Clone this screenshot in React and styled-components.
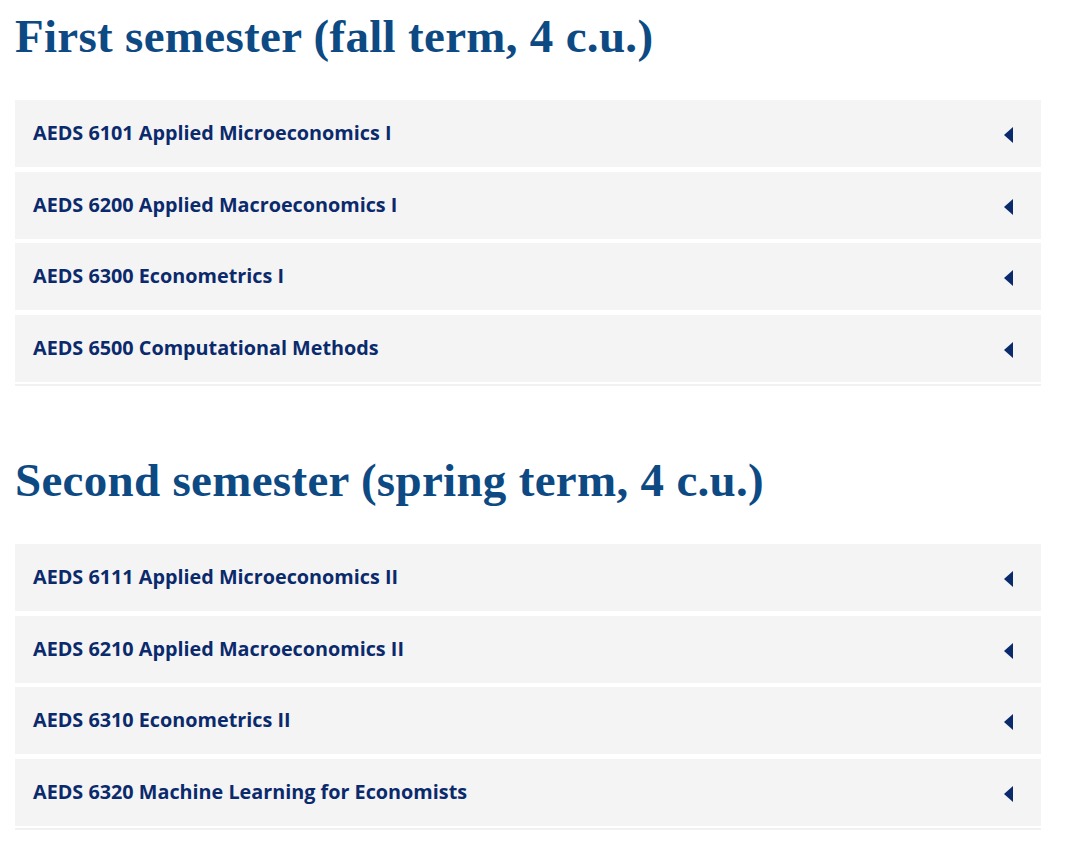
import React from 'react';
import styled, { createGlobalStyle } from 'styled-components';

const GlobalStyle = createGlobalStyle`
  body {
    margin: 0;
    background: #ffffff;
  }
`;

const Page = styled.div`
  padding: 0 39px 0 15px;
  width: 1026px;
`;

const Section = styled.section`
  margin-bottom: 58px;
`;

const Heading = styled.h2`
  margin: 0;
  padding-top: 11px;
  height: 100px;
  box-sizing: border-box;
  font-family: "Liberation Serif", "Times New Roman", serif;
  font-weight: 700;
  font-size: 47px;
  line-height: 50px;
  color: #0d4a83;
  letter-spacing: 0.3px;
`;

const List = styled.div`
  display: flex;
  flex-direction: column;
  gap: 4.67px;
  border-bottom: 2px solid #f1f1f2;
  padding-bottom: 2px;
`;

const Item = styled.button`
  display: flex;
  align-items: center;
  justify-content: space-between;
  height: 67px;
  padding: 0 28px 0 18px;
  border: 0;
  background: #f4f4f5;
  cursor: pointer;
  text-align: left;
  font-family: "Open Sans", "Liberation Sans", sans-serif;
  font-weight: 700;
  font-size: 19.8px;
  color: #0b2a6c;
`;

const Title = styled.span`
  margin-top: -2px;
`;

const Caret = styled.span`
  width: 0;
  height: 0;
  border-top: 8px solid transparent;
  border-bottom: 8px solid transparent;
  border-right: 9px solid #0b2a6c;
  margin-top: 3px;
`;

const semesters = [
  {
    title: 'First semester (fall term, 4 c.u.)',
    courses: [
      'AEDS 6101 Applied Microeconomics I',
      'AEDS 6200 Applied Macroeconomics I',
      'AEDS 6300 Econometrics I',
      'AEDS 6500 Computational Methods',
    ],
  },
  {
    title: 'Second semester (spring term, 4 c.u.)',
    courses: [
      'AEDS 6111 Applied Microeconomics II',
      'AEDS 6210 Applied Macroeconomics II',
      'AEDS 6310 Econometrics II',
      'AEDS 6320 Machine Learning for Economists',
    ],
  },
];

export default function App() {
  return (
    <Page>
      <GlobalStyle />
      {semesters.map((s) => (
        <Section key={s.title}>
          <Heading>{s.title}</Heading>
          <List>
            {s.courses.map((c) => (
              <Item key={c}>
                <Title>{c}</Title>
                <Caret />
              </Item>
            ))}
          </List>
        </Section>
      ))}
    </Page>
  );
}
